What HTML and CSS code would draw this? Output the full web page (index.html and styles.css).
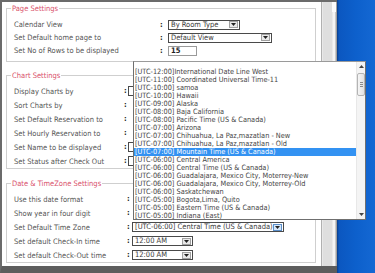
FILE: index.html
```html
<!DOCTYPE html>
<html>
<head>
<meta charset="utf-8">
<link rel="stylesheet" href="styles.css">
</head>
<body>
<div class="screen">
  <div class="frame">
    <div class="window">
      <fieldset class="group group-page">
        <legend>Page Settings</legend>
        <div class="row"><span class="label">Calendar View</span><span class="colon">:</span><span class="select sel-room"><span class="val">By Room Type</span><span class="btn"><svg width="5" height="3" viewBox="0 0 5 3"><path d="M0 0H5L2.5 3Z" fill="#222"/></svg></span></span></div>
        <div class="row"><span class="label">Set Default home page to</span><span class="colon">:</span><span class="select sel-view"><span class="val">Default View</span><span class="btn"><svg width="5" height="3" viewBox="0 0 5 3"><path d="M0 0H5L2.5 3Z" fill="#222"/></svg></span></span></div>
        <div class="row"><span class="label">Set No of Rows to be displayed</span><span class="colon">:</span><span class="input">15</span></div>
      </fieldset>
      <fieldset class="group group-chart">
        <legend>Chart Settings</legend>
        <div class="row"><span class="label">Display Charts by</span><span class="colon">:</span><span class="select sel-hidden"><span class="val"></span></span></div>
        <div class="row"><span class="label">Sort Charts by</span><span class="colon">:</span><span></span></div>
        <div class="row"><span class="label">Set Default Reservation to</span><span class="colon">:</span><span></span></div>
        <div class="row"><span class="label">Set Hourly Reservation to</span><span class="colon">:</span><span></span></div>
        <div class="row"><span class="label">Set Name to be displayed</span><span class="colon">:</span><span class="select sel-hidden"><span class="val"></span></span></div>
        <div class="row"><span class="label">Set Status after Check Out</span><span class="colon">:</span><span class="select sel-hidden"><span class="val"></span></span></div>
      </fieldset>
      <fieldset class="group group-date">
        <legend>Date &amp; TimeZone Settings</legend>
        <div class="row"><span class="label">Use this date format</span><span class="colon">:</span><span></span></div>
        <div class="row"><span class="label">Show year in four digit</span><span class="colon">:</span><span></span></div>
        <div class="row"><span class="label">Set Default Time Zone</span><span class="colon">:</span><span class="select sel-zone"><span class="val">[UTC-06:00] Central Time (US &amp; Canada)</span><span class="btn btn-active"><svg width="5" height="3" viewBox="0 0 5 3"><path d="M0 0H5L2.5 3Z" fill="#222"/></svg></span></span></div>
        <div class="row"><span class="label">Set default Check-In time</span><span class="colon">:</span><span class="select sel-time"><span class="val">12:00 AM</span><span class="btn"><svg width="5" height="3" viewBox="0 0 5 3"><path d="M0 0H5L2.5 3Z" fill="#222"/></svg></span></span></div>
        <div class="row"><span class="label">Set default Check-Out time</span><span class="colon">:</span><span class="select sel-time"><span class="val">12:00 AM</span><span class="btn"><svg width="5" height="3" viewBox="0 0 5 3"><path d="M0 0H5L2.5 3Z" fill="#222"/></svg></span></span></div>
      </fieldset>
    </div>
    <div class="vscroll"><div class="vthumb"></div></div>
  </div>
  <div class="desktop"></div>

  <div class="droplist">
    <div class="opts">
      <div class="opt">[UTC-12:00]International Date Line West</div>
      <div class="opt">[UTC-11:00] Coordinated Universal Time-11</div>
      <div class="opt">[UTC-10:00] samoa</div>
      <div class="opt">[UTC-10:00] Hawaii</div>
      <div class="opt">[UTC-09:00] Alaska</div>
      <div class="opt">[UTC-08:00] Baja California</div>
      <div class="opt">[UTC-08:00] Pacific Time (US &amp; Canada)</div>
      <div class="opt">[UTC-07:00] Arizona</div>
      <div class="opt">[UTC-07:00] Chihuahua, La Paz,mazatlan - New</div>
      <div class="opt">[UTC-07:00] Chihuahua, La Paz,mazatlan - Old</div>
      <div class="opt opt-selected">[UTC-07:00] Mountain Time (US &amp; Canada)</div>
      <div class="opt">[UTC-06:00] Central America</div>
      <div class="opt">[UTC-06:00] Central Time (US &amp; Canada)</div>
      <div class="opt">[UTC-06:00] Guadalajara, Mexico City, Moterrey-New</div>
      <div class="opt">[UTC-06:00] Guadalajara, Mexico City, Moterrey-Old</div>
      <div class="opt">[UTC-06:00] Saskatchewan</div>
      <div class="opt">[UTC-05:00] Bogota,Lima, Quito</div>
      <div class="opt">[UTC-05:00] Eastern Time (US &amp; Canada)</div>
      <div class="opt">[UTC-05:00] Indiana (East)</div>
    </div>
    <div class="sbar">
      <div class="sarrow"><svg width="5" height="3" viewBox="0 0 5 3"><path d="M0 3H5L2.5 0Z" fill="#444"/></svg></div>
      <div class="sthumb"><span></span><span></span><span></span></div>
      <div class="sspace"></div>
      <div class="sarrow"><svg width="5" height="3" viewBox="0 0 5 3"><path d="M0 0H5L2.5 3Z" fill="#444"/></svg></div>
    </div>
  </div>
</div>
</body>
</html>
```

FILE: styles.css
```css
* { box-sizing: border-box; }
html, body { margin: 0; padding: 0; }
body {
  width: 375px;
  height: 273px;
  overflow: hidden;
  background: #fff;
  font-family: "DejaVu Sans Condensed", "DejaVu Sans", sans-serif;
  font-size: 7.5px;
  color: #555;
}
.screen {
  position: relative;
  display: flex;
  width: 375px;
  height: 273px;
}
.frame {
  display: flex;
  width: 337px;
  height: 273px;
  border-top: 2px solid #6b6b6b;
  border-left: 2px solid #6b6b6b;
  border-bottom: 7px solid #5d5d5d;
}
.window {
  width: 320px;
  background: #fff;
  border-right: 1px solid #b0b0b0;
  padding: 2px 5px 0 4px;
  display: flex;
  flex-direction: column;
}
.vscroll {
  flex: 1;
  position: relative;
  background: linear-gradient(90deg, #f2f2f2 0, #dedede 1px, #dedede 10px, #f4f4f4 11px, #f4f4f4 13px, #a0a0a0 14px);
}
.vthumb {
  margin: 0 1px 0 10px;
  height: 10px;
  background: #fbfbfb;
}
.desktop {
  flex: 1;
  background: linear-gradient(90deg, #0a3d87 0, #0b57c0 2px, #0d60cc 50%, #1468d3 100%);
}

.group {
  margin: 0;
  min-width: 0;
  border: 1px solid #cfcfcf;
  padding: 4px 0 0 7px;
}
.group legend {
  margin-left: -3px;
  padding: 0 1px;
  line-height: 9px;
  color: #d9506a;
}
.group-page { padding-top: 5px; padding-bottom: 4px; }
.group-chart { margin-top: 9px; }
.group-date { margin-top: 10px; }

.row {
  display: grid;
  align-items: center;
  height: 14px;
}
.group-page .row { height: 13px; grid-template-columns: 146px 8px auto; }
.group-chart .row { grid-template-columns: 110px 4px auto; }
.group-date .row { grid-template-columns: 113px 5px auto; }

.label { white-space: nowrap; }
.colon {
  font-weight: bold;
  color: #222;
  line-height: 8px;
}

.select {
  display: flex;
  align-items: center;
  height: 10px;
  border: 1px solid #4a4a4a;
  background: #fff;
  overflow: hidden;
}
.select .val {
  flex: 1;
  min-width: 0;
  padding-left: 2px;
  white-space: nowrap;
  overflow: hidden;
  line-height: 8px;
  color: #3a3a3a;
}
.btn {
  flex: none;
  display: flex;
  align-items: center;
  justify-content: center;
  width: 9px;
  height: 7px;
  margin-right: 1px;
  background: #e9e9e9;
  border: 1px solid #a0a0a0;
}
.btn-active {
  background: #d7e8fa;
  border-color: #5c8fc9;
}
.sel-room { width: 72px; }
.sel-view { width: 104px; }
.sel-zone { width: 152px; }
.sel-time { width: 61px; }
.sel-hidden { width: 100px; }
.input {
  width: 29px;
  height: 10px;
  border: 1px solid #9a9a9a;
  padding-left: 2px;
  font-weight: bold;
  line-height: 8px;
  color: #222;
}

.droplist {
  position: absolute;
  left: 133px;
  top: 61px;
  width: 233px;
  height: 159px;
  display: flex;
  background: #fff;
  border: 1px solid #6f6f6f;
  border-top-color: #9a9a9a;
  z-index: 2;
}
.opts {
  flex: 1;
  padding-top: 6px;
}
.opt {
  height: 8px;
  line-height: 8px;
  padding-left: 1px;
  font-size: 7.3px;
  white-space: nowrap;
  color: #444;
}
.opt-selected {
  background: #3392f2;
  color: #fff;
}
.sbar {
  width: 9px;
  display: flex;
  flex-direction: column;
  background: #f4f4f4;
  border-left: 1px solid #e8e8e8;
}
.sarrow {
  height: 9px;
  display: flex;
  align-items: center;
  justify-content: center;
}
.sthumb {
  margin: 2px 0 0 0;
  height: 23px;
  border: 1px solid #b4b4b4;
  border-radius: 2px;
  background: linear-gradient(90deg, #f5f5f5, #e2e2e2);
  display: flex;
  flex-direction: column;
  align-items: center;
  justify-content: center;
  gap: 1px;
}
.sthumb span {
  width: 3px;
  height: 1px;
  background: #8a8a8a;
}
.sspace { flex: 1; }
```
